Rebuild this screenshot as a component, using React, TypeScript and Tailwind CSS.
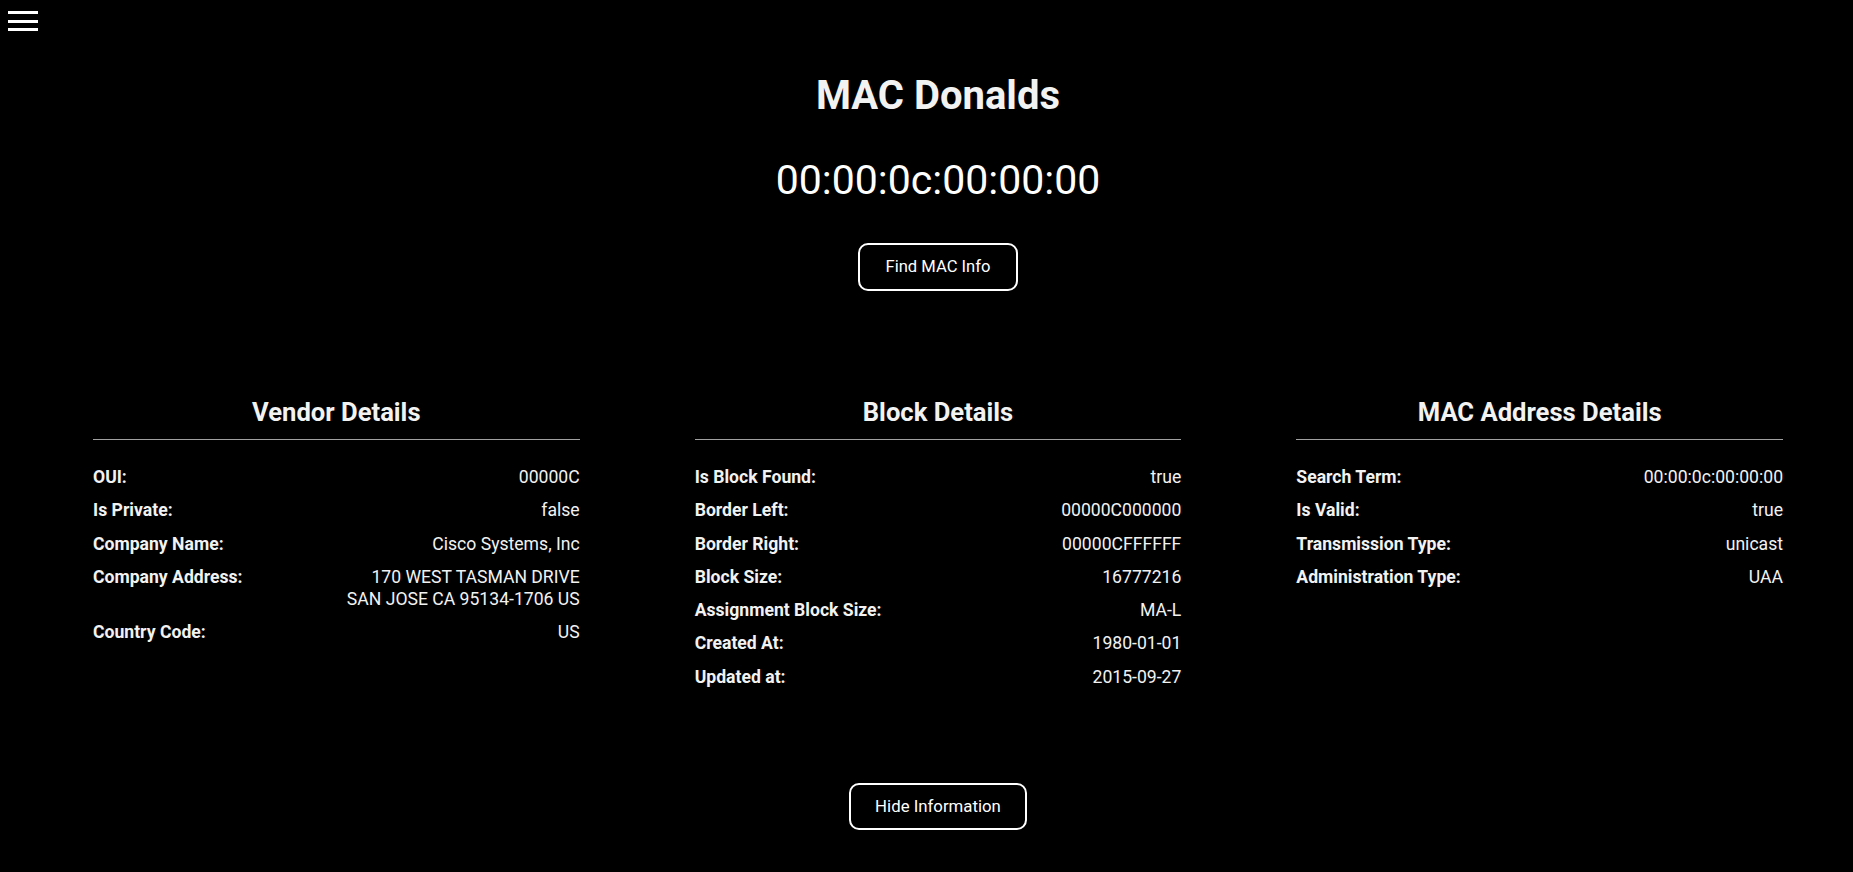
import React from "react";

type Row = { label: string; value: string[] };

const vendor: Row[] = [
  { label: "OUI:", value: ["00000C"] },
  { label: "Is Private:", value: ["false"] },
  { label: "Company Name:", value: ["Cisco Systems, Inc"] },
  { label: "Company Address:", value: ["170 WEST TASMAN DRIVE", "SAN JOSE CA 95134-1706 US"] },
  { label: "Country Code:", value: ["US"] },
];

const block: Row[] = [
  { label: "Is Block Found:", value: ["true"] },
  { label: "Border Left:", value: ["00000C000000"] },
  { label: "Border Right:", value: ["00000CFFFFFF"] },
  { label: "Block Size:", value: ["16777216"] },
  { label: "Assignment Block Size:", value: ["MA-L"] },
  { label: "Created At:", value: ["1980-01-01"] },
  { label: "Updated at:", value: ["2015-09-27"] },
];

const mac: Row[] = [
  { label: "Search Term:", value: ["00:00:0c:00:00:00"] },
  { label: "Is Valid:", value: ["true"] },
  { label: "Transmission Type:", value: ["unicast"] },
  { label: "Administration Type:", value: ["UAA"] },
];

function Card({ title, rows }: { title: string; rows: Row[] }) {
  return (
    <div className="flex-1 flex flex-col">
      <h2 className="text-center font-bold text-[25.6px] leading-[30px] pb-[12px] border-b border-[#a0a0a0] text-[#f2f2f2]">
        {title}
      </h2>
      <div className="flex flex-col gap-[11.6px] pt-[27px]">
        {rows.map((r) => (
          <div key={r.label} className="flex justify-between text-[17.6px] leading-[21.7px]">
            <span className="font-bold text-[#f2f2f2]">{r.label}</span>
            <span className="text-right text-[#f2f2f2]">
              {r.value.map((v) => (
                <div key={v}>{v}</div>
              ))}
            </span>
          </div>
        ))}
      </div>
    </div>
  );
}

export default function App() {
  return (
    <div
      className="min-h-[872px] w-full bg-black text-white relative"
      style={{ fontFamily: "Roboto, 'Noto Sans', Arial, sans-serif" }}
    >
      <button className="absolute left-[8px] top-[11px] flex flex-col gap-[5.5px] w-[30px]">
        <span className="block h-[3px] w-[30px] bg-white" />
        <span className="block h-[3px] w-[30px] bg-white" />
        <span className="block h-[3px] w-[30px] bg-white" />
      </button>

      <main className="pl-[23px] flex flex-col items-center">
        <h1 className="mt-[72px] text-[40px] leading-[48px] font-bold text-[#f2f2f2]">MAC Donalds</h1>
        <div className="mt-[36px] text-[41px] leading-[48px] text-white">00:00:0c:00:00:00</div>
        <button className="mt-[39px] h-[48px] w-[160px] rounded-[10px] border-2 border-white text-[16.6px] text-white">
          Find MAC Info
        </button>

        <div className="mt-[106px] w-[1690px] flex gap-[115px] items-start">
          <Card title="Vendor Details" rows={vendor} />
          <Card title="Block Details" rows={block} />
          <Card title="MAC Address Details" rows={mac} />
        </div>

        <button className="mt-[95px] h-[47px] w-[178px] rounded-[10px] border-2 border-white text-[16.8px] text-white">
          Hide Information
        </button>
      </main>
    </div>
  );
}
